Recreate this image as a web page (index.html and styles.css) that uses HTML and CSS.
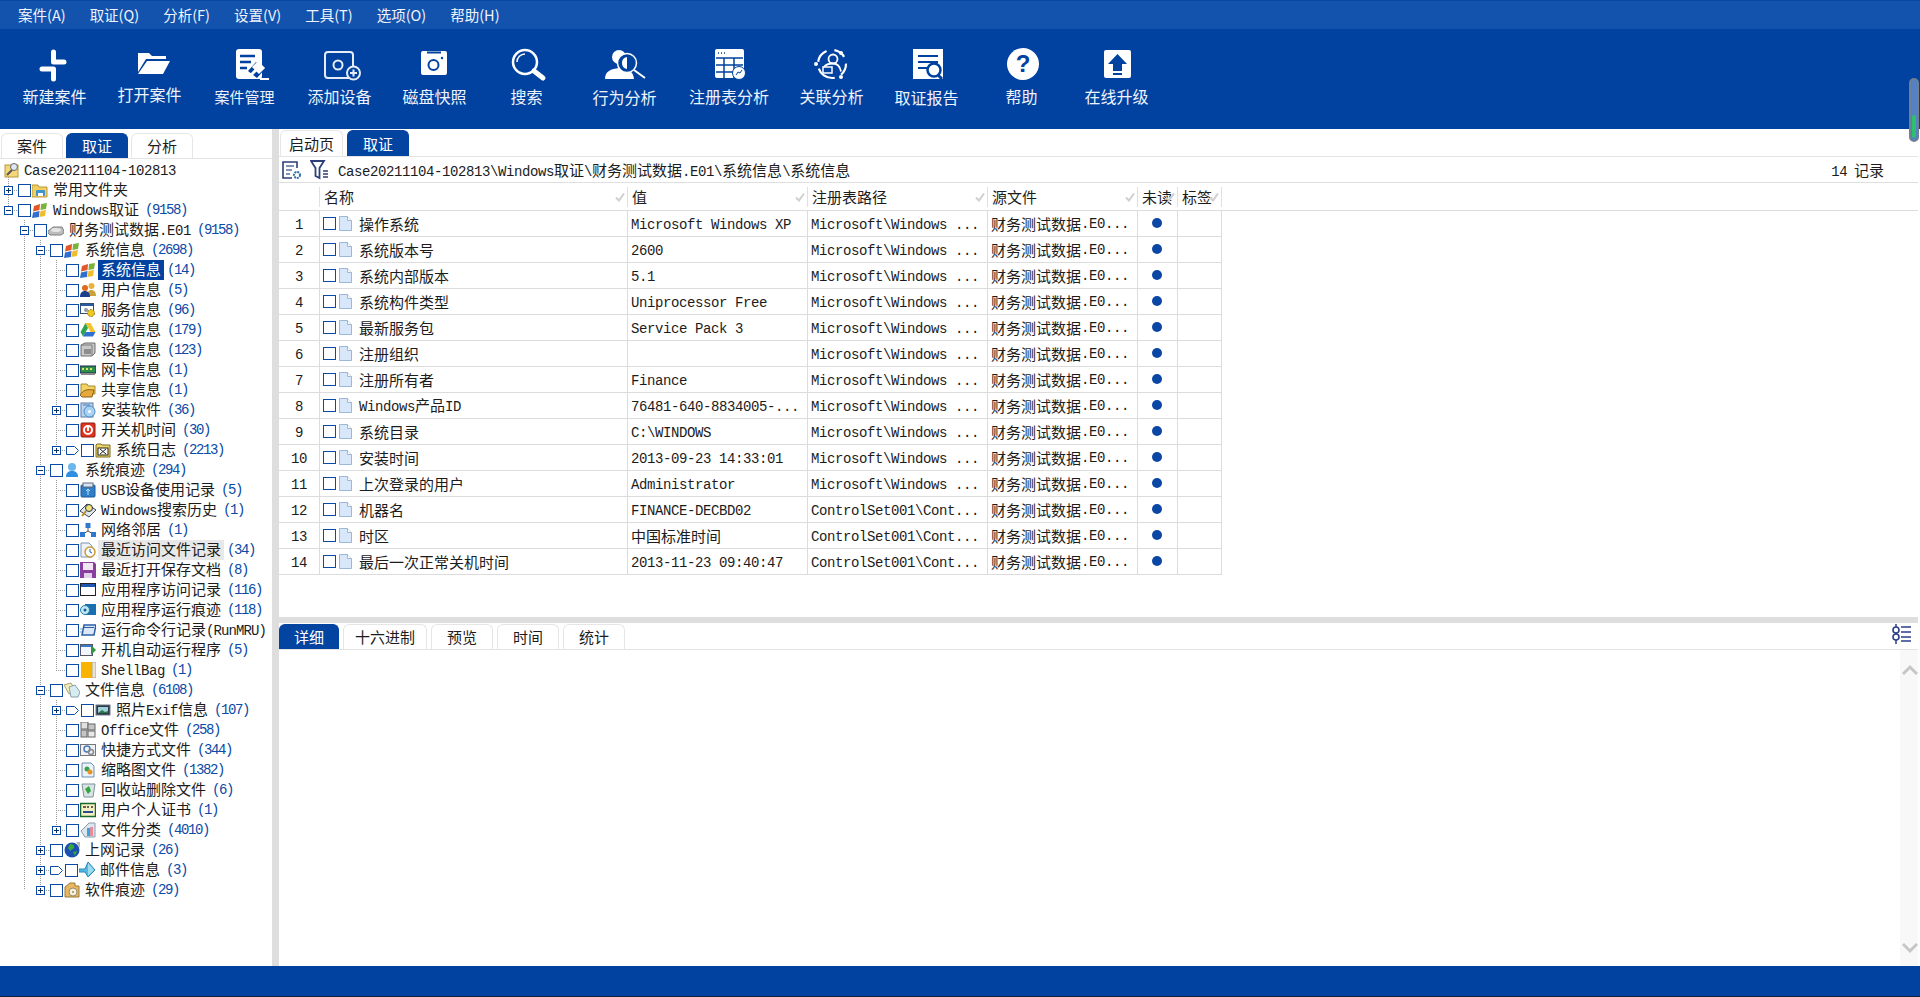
FILE: index.html
```html
<!DOCTYPE html>
<html lang="zh-CN">
<head>
<meta charset="utf-8">
<title>取证</title>
<link rel="stylesheet" href="styles.css">
</head>
<body>
<svg class="defs" aria-hidden="true">
  <symbol id="i-case" viewBox="0 0 16 16"><rect x="1" y="3" width="13" height="12" fill="#f3d77a" stroke="#b8963a"/><circle cx="10" cy="5" r="3.5" fill="#dfe8f0" stroke="#666"/><path d="M8 8 3 13" stroke="#555" stroke-width="2"/></symbol>
  <symbol id="i-folder" viewBox="0 0 16 16"><path d="M0 3h6l1 2h8v10H0z" fill="#f0cf62" stroke="#b99a3a"/><rect x="4" y="8" width="9" height="6" rx="1" fill="#3d95cf"/><rect x="6" y="11" width="5" height="3" fill="#fff"/></symbol>
  <symbol id="i-win" viewBox="0 0 16 16"><path d="M2 4 8 2 7.500 8 1 9.500z" fill="#e2562c"/><path d="M9 2l6-1-1 6-5.500 1z" fill="#7ab33a"/><path d="M1 10.500 7.500 9 7 15l-7 1z" fill="#2f6fc9"/><path d="M8.500 9 14 8l-1 6-5.500 1z" fill="#f2bd2c"/></symbol>
  <symbol id="i-hdd" viewBox="0 0 16 16"><path d="M0 9 5 5h9l2 4v2l-3 2H2L0 11z" fill="#bcbcbc" stroke="#808080"/><ellipse cx="8" cy="8" rx="5" ry="2" fill="#e4e4e4"/></symbol>
  <symbol id="i-users" viewBox="0 0 16 16"><circle cx="11.500" cy="4" r="3" fill="#e8b23c"/><path d="M7 14c0-4 2-6 4.500-6S16 10 16 14z" fill="#c9a13c"/><circle cx="5" cy="6" r="3" fill="#e06a1e"/><path d="M0 15c0-4 2-6 5-6s5 2 5 6z" fill="#1b3f8a"/></symbol>
  <symbol id="i-service" viewBox="0 0 16 16"><rect x=".5" y="1.500" width="13" height="10" fill="#fff" stroke="#34506e"/><rect x="1" y="2" width="12" height="2" fill="#2a5ba0"/><circle cx="11" cy="11" r="3.500" fill="#f0c820" stroke="#8a7410" stroke-dasharray="2 1"/><circle cx="6" cy="8" r="2" fill="#8a9aa8"/></symbol>
  <symbol id="i-drive" viewBox="0 0 16 16"><path d="M5.500 1h5l5 9h-5z" fill="#f4c430"/><path d="M5.500 1 .5 10l2.500 4.500L8 6z" fill="#2da44e"/><path d="M3 14.500h10l2.500-4.500H5.500z" fill="#2e6fd0"/></symbol>
  <symbol id="i-device" viewBox="0 0 16 16"><path d="M1 3 5 1h10v10l-3 3H1z" fill="#c8c8c8" stroke="#6d6d6d"/><rect x="4" y="7" width="7" height="5" fill="#8d8d8d"/><path d="M1 3h11v11" fill="none" stroke="#7a7a7a"/></symbol>
  <symbol id="i-nic" viewBox="0 0 16 16"><rect x="0" y="4" width="16" height="7" fill="#2f8f4a" stroke="#225"/><path d="M2 7h2M6 7h2M10 7h2" stroke="#d6e86a" stroke-width="2"/><path d="M1 12h14" stroke="#888" stroke-width="2"/></symbol>
  <symbol id="i-share" viewBox="0 0 16 16"><path d="M1 2h6l1 2h7v8H1z" fill="#f3d365" stroke="#a88a2a"/><path d="M0 13c3-5 7-6 14-5l-2 7H2z" fill="#e8a93c" stroke="#8a5f1a"/></symbol>
  <symbol id="i-install" viewBox="0 0 16 16"><rect x="1" y="1" width="12" height="14" fill="#bcd5ee" stroke="#5a7da8"/><circle cx="9.500" cy="9.500" r="5.500" fill="#a8d2f4" stroke="#4a86c4"/><circle cx="9.500" cy="9.500" r="1.500" fill="#fff"/><path d="M3 3h7" stroke="#4a78b0"/></symbol>
  <symbol id="i-power" viewBox="0 0 16 16"><rect x="1" y="1" width="14" height="14" rx="1" fill="#e03420" stroke="#8c1c10"/><circle cx="8" cy="8" r="4" fill="none" stroke="#fff" stroke-width="2"/><rect x="7" y="4" width="2" height="5" fill="#fff"/></symbol>
  <symbol id="i-log" viewBox="0 0 16 16"><path d="M2 2h4l1 1h8v12H1V3z" fill="#f0d868" stroke="#7a6a20"/><rect x="3" y="6" width="10" height="7" fill="#fff" stroke="#222"/><path d="M5 7l6 5M11 7l-6 5" stroke="#222"/></symbol>
  <symbol id="i-person" viewBox="0 0 16 16"><circle cx="8" cy="5" r="4" fill="#6bb7ee"/><path d="M2 15c0-5 3-6 6-6s6 1 6 6z" fill="#2f8ee0"/></symbol>
  <symbol id="i-usb" viewBox="0 0 16 16"><rect x="1" y="3" width="14" height="12" rx="1" fill="#2f7fc8" stroke="#1b5a96"/><rect x="3" y="1" width="10" height="4" fill="#d8e6f4" stroke="#667"/><path d="M8 7v6M6 9l2-2 2 2" stroke="#bfe0fa" fill="none"/></symbol>
  <symbol id="i-search" viewBox="0 0 16 16"><path d="M0 9 7 2l9 6-7 7z" fill="#dfe7ef" stroke="#445"/><circle cx="9" cy="6" r="3.500" fill="#f4e27a" stroke="#234"/><path d="M6 9 2 14" stroke="#b88a1a" stroke-width="2"/></symbol>
  <symbol id="i-net" viewBox="0 0 16 16"><path d="M8 5v4M3 12l5-3 5 3" stroke="#555" fill="none"/><rect x="5.500" y="1" width="5" height="5" fill="#2f78d0"/><rect x="0" y="10" width="5" height="5" fill="#2f78d0"/><rect x="11" y="10" width="5" height="5" fill="#2f78d0"/></symbol>
  <symbol id="i-recent" viewBox="0 0 16 16"><path d="M1 1h8l3 3v11H1z" fill="#eef3fa" stroke="#7f93ad"/><circle cx="10" cy="10" r="5" fill="#fff" stroke="#c79a3a" stroke-width="1.500"/><path d="M10 7v3l2 1" stroke="#2f5ea8" fill="none"/></symbol>
  <symbol id="i-save" viewBox="0 0 16 16"><path d="M0 0h14l2 2v14H0z" fill="#8a3fa0"/><rect x="3" y="1" width="10" height="7" fill="#f0e6f4"/><rect x="4" y="11" width="8" height="5" fill="#e0d0e8"/></symbol>
  <symbol id="i-app" viewBox="0 0 16 16"><rect x=".5" y="1.500" width="15" height="12" fill="#fff" stroke="#222"/><rect x="1" y="2" width="14" height="3" fill="#1f57b0"/></symbol>
  <symbol id="i-run" viewBox="0 0 16 16"><rect x="5" y="2" width="11" height="11" fill="#1a6fb0"/><circle cx="5" cy="8" r="4.500" fill="#bfe8f4" stroke="#2a7fa8"/><circle cx="5" cy="8" r="1.500" fill="#1a5f90"/></symbol>
  <symbol id="i-cmd" viewBox="0 0 16 16"><path d="M4 3h12l-2 10H2z" fill="#dce8f6" stroke="#2a5fa8" stroke-width="1.500"/><path d="M4 5.500h10" stroke="#2a5fa8"/><path d="M0 7h3M0 10h2" stroke="#6fa0d0"/></symbol>
  <symbol id="i-startup" viewBox="0 0 16 16"><rect x=".5" y="2.500" width="12" height="11" fill="#f2f6fc" stroke="#556"/><rect x="1" y="3" width="11" height="2" fill="#3a78c8"/><path d="M11 3l5 5-5 5z" fill="#2c9a3c"/></symbol>
  <symbol id="i-bag" viewBox="0 0 16 16"><rect x="1" y="0" width="11" height="16" fill="#f8b400"/><rect x="12" y="0" width="4" height="16" fill="#e8e4d0" stroke="#b0a890"/></symbol>
  <symbol id="i-files" viewBox="0 0 16 16"><path d="M0 3l7-2 5 8-7 3z" fill="#f5eeb8" stroke="#a8a070"/><path d="M5 5l6-2 5 7-2 5H7z" fill="#d6ecf0" stroke="#88a0a8"/></symbol>
  <symbol id="i-photo" viewBox="0 0 16 16"><rect x="1" y="3" width="14" height="10" fill="#2b3a48" stroke="#6c7a88"/><rect x="3" y="5" width="10" height="6" fill="#9fd0dc"/><path d="M3 11l4-3 3 2 3-1v2z" fill="#2c7a4a"/></symbol>
  <symbol id="i-office" viewBox="0 0 16 16"><rect x="1" y="0" width="7" height="7" fill="#e0e0e0" stroke="#666"/><rect x="8" y="2" width="7" height="6" fill="#c4c4c4" stroke="#666"/><rect x="1" y="8" width="6" height="7" fill="#c4c4c4" stroke="#666"/><rect x="8" y="9" width="7" height="6" fill="#e8e8e8" stroke="#666"/></symbol>
  <symbol id="i-link" viewBox="0 0 16 16"><rect x=".5" y="2.500" width="15" height="11" fill="#eef1f5" stroke="#777"/><circle cx="7" cy="7" r="3" fill="none" stroke="#4a7ab8" stroke-width="1.500"/><circle cx="11" cy="10" r="2.500" fill="none" stroke="#8a8a8a" stroke-width="1.500"/></symbol>
  <symbol id="i-thumb" viewBox="0 0 16 16"><path d="M2 1h9l3 3v11H2z" fill="#eaf2fa" stroke="#6f8fb0"/><circle cx="7" cy="7" r="2.500" fill="#3aa04a"/><circle cx="10" cy="10" r="2.500" fill="#e8932a"/></symbol>
  <symbol id="i-bin" viewBox="0 0 16 16"><path d="M2 2h13l-2 13H4z" fill="#d8e4e8" stroke="#7f9298"/><path d="M5 7l4-3 2 5-3 3z" fill="#34a53c"/></symbol>
  <symbol id="i-cert" viewBox="0 0 16 16"><rect x=".5" y="1.500" width="15" height="13" fill="#f6efc0" stroke="#17682f" stroke-width="1.500"/><path d="M3 5h3M7 5h2M11 5h2" stroke="#333" stroke-width="1.500"/><path d="M3 10h10" stroke="#2a4a9a" stroke-width="2"/></symbol>
  <symbol id="i-class" viewBox="0 0 16 16"><path d="M1 9 9 1h6v14H5z" fill="#dde6ee" stroke="#8a9aa8"/><rect x="7" y="6" width="3" height="8" fill="#35a6d8"/><rect x="10" y="5" width="3" height="9" fill="#ea8a9a"/></symbol>
  <symbol id="i-globe" viewBox="0 0 16 16"><circle cx="8" cy="8" r="7.500" fill="#1b4fb0"/><path d="M6 2c3 0 5 2 4 4L6 9 4 6z" fill="#38a83c"/><path d="M9 10l4-1-2 5z" fill="#38a83c"/><path d="M12 0h4v6z" fill="#b8b8b8"/></symbol>
  <symbol id="i-mail" viewBox="0 0 16 16"><path d="M0 7h6l3-7 7 8-7 7-3-5H0z" fill="#4fb8e0" stroke="#2a8ab8"/><path d="M9 1v13l6-6z" fill="#9fdcf0"/></symbol>
  <symbol id="i-soft" viewBox="0 0 16 16"><path d="M1 5l5-4h5v3h4v11H1z" fill="#e8b860" stroke="#9a7a3a"/><circle cx="9" cy="10" r="4" fill="#f4f0e4" stroke="#9a8a6a"/><circle cx="9" cy="10" r="1" fill="#a88a4a"/></symbol>
  <symbol id="i-doc" viewBox="0 0 13 15"><path d="M.500.500h8l4 4v10H.500z" fill="#d8e8fa" stroke="#9db7d6"/><path d="M8.500.500v4h4" fill="#fff" stroke="#9db7d6"/></symbol>
  <symbol id="i-tick" viewBox="0 0 10 10"><path d="M1 5.500 4 8.500 9 1.500" fill="none" stroke="#cfcfcf" stroke-width="2"/></symbol>
  <symbol id="i-tag" viewBox="0 0 13 9"><path d="M.5.500h8l4 4-4 4h-8z" fill="#fff" stroke="#0b4aa6"/></symbol>
</svg>

<nav class="menubar">
  <span>案件(A)</span><span>取证(Q)</span><span>分析(F)</span><span>设置(V)</span><span>工具(T)</span><span>选项(O)</span><span>帮助(H)</span>
</nav>

<header class="toolbar">
  <div class="tool"><svg class="tool-ic" viewBox="-10 0 60 32"><path d="M18.500 3V13H29M7 20H18.500V30" fill="none" stroke="#fff" stroke-width="5" stroke-linecap="round" stroke-linejoin="round"/></svg><span class="lab">新建案件</span></div>
  <div class="tool"><svg class="tool-ic" viewBox="-10 0 60 32"><path d="M8 4h11l3 3h14v3H16L8 23z" fill="#fff"/><path d="M17 12h23l-7 13H8z" fill="#fff"/></svg><span class="lab lift">打开案件</span></div>
  <div class="tool"><svg class="tool-ic" viewBox="-10 0 60 32"><rect x="11" y="0" width="26" height="30" rx="3" fill="#fff"/><path d="M15 7h15M15 13h11M15 19h7" stroke="#0142a0" stroke-width="2.500"/><path d="M23 22l8-9 9 7-8 9z" fill="#0142a0"/><path d="M29 18l4-4 5 5-4 4zM31 21l-7 7" stroke="#fff" stroke-width="3" fill="#fff"/><path d="M35 30h9" stroke="#fff" stroke-width="2"/></svg><span class="lab sink small">案件管理</span></div>
  <div class="tool"><svg class="tool-ic" viewBox="-10 0 60 32"><rect x="5" y="3" width="28" height="26" rx="3" fill="none" stroke="#e6edf7" stroke-width="2"/><circle cx="18" cy="16" r="4.500" fill="none" stroke="#e6edf7" stroke-width="2"/><circle cx="33.500" cy="24" r="6.500" fill="#0142a0" stroke="#e6edf7" stroke-width="2"/><path d="M33.500 20.500v7M30 24h7" stroke="#e6edf7" stroke-width="2"/></svg><span class="lab">添加设备</span></div>
  <div class="tool"><svg class="tool-ic" viewBox="-10 0 60 32"><g transform="translate(-2)"><rect x="8" y="2" width="26" height="24" rx="2" fill="#fff"/><path d="M14 3.500h14" stroke="#0142a0" stroke-width="2"/><circle cx="20.500" cy="16" r="5" fill="#fff" stroke="#0142a0" stroke-width="2"/><circle cx="29" cy="9" r="1.200" fill="#0142a0"/></g></svg><span class="lab">磁盘快照</span></div>
  <div class="tool shift"><svg class="tool-ic" viewBox="-10 0 60 32"><circle cx="18" cy="13" r="12" fill="none" stroke="#fff" stroke-width="2.500"/><path d="M10 13a8 8 0 0 1 8-8" fill="none" stroke="#fff" stroke-width="1.500"/><path d="M27 22l9 7" stroke="#fff" stroke-width="5" stroke-linecap="round"/></svg><span class="lab">搜索</span></div>
  <div class="tool"><svg class="tool-ic" viewBox="-10 0 60 32"><g transform="translate(-2)"><circle cx="16" cy="8" r="7" fill="#fff"/><path d="M2 30c0-8 6-10 14-11s14 3 15 11z" fill="#fff"/><circle cx="24" cy="14" r="9.500" fill="#0142a0" stroke="#fff" stroke-width="1.500"/><path d="M19 14a6 6 0 0 1 5-6v12a6 6 0 0 1-5-6z" fill="#fff"/><path d="M31 21l11 8" stroke="#fff" stroke-width="2"/></g></svg><span class="lab sink">行为分析</span></div>
  <div class="tool wide"><svg class="tool-ic" viewBox="-10 0 60 32"><rect x="6" y="0" width="29" height="29" rx="2" fill="#fff"/><path d="M7 9h27M7 16h27M7 23h27M15 9v20M25 9v20" stroke="#0142a0" stroke-width="1.500"/><path d="M9 4h1M12 4h1M15 4h1" stroke="#0142a0" stroke-width="1.500"/><circle cx="30" cy="24" r="6.500" fill="#fff" stroke="#0142a0"/><path d="M27 26l2-3 2 1 2-3" stroke="#0142a0" fill="none"/></svg><span class="lab">注册表分析</span></div>
  <div class="tool"><svg class="tool-ic" viewBox="-10 0 60 32"><circle cx="20" cy="15" r="14" fill="none" stroke="#fff" stroke-width="2.200" stroke-dasharray="12 7 20 7 14 8"/><circle cx="29" cy="4" r="2" fill="#fff"/><circle cx="4" cy="15" r="2" fill="#fff"/><circle cx="29" cy="28" r="2" fill="#fff"/><circle cx="21" cy="10" r="4.500" fill="none" stroke="#fff" stroke-width="1.800"/><path d="M12 18c2-3 5-3.500 9-3.500s7 3 8 8" fill="none" stroke="#fff" stroke-width="1.800"/><rect x="11" y="18" width="9" height="6" fill="#0142a0" stroke="#fff" stroke-width="1.500"/></svg><span class="lab">关联分析</span></div>
  <div class="tool"><svg class="tool-ic" viewBox="-10 0 60 32"><path d="M6 0h30v30H6z" fill="#fff"/><path d="M11 7h20M11 13h20M11 19h9" stroke="#0142a0" stroke-width="2.200"/><circle cx="27" cy="21" r="6.500" fill="#fff" stroke="#0142a0" stroke-width="2.500"/><path d="M31 26l4 4" stroke="#0142a0" stroke-width="3"/></svg><span class="lab sink">取证报告</span></div>
  <div class="tool"><svg class="tool-ic" viewBox="-10 0 60 32"><circle cx="21" cy="15" r="16" fill="#fff"/><text x="21" y="23" class="help-q">?</text></svg><span class="lab">帮助</span></div>
  <div class="tool"><svg class="tool-ic" viewBox="-10 0 60 32"><rect x="7" y="1" width="27" height="28" rx="2" fill="#fff"/><path d="M20.500 5 30 15h-5v7h-9v-7h-5z" fill="#0142a0"/><path d="M16 25h9" stroke="#0142a0" stroke-width="2"/></svg><span class="lab">在线升级</span></div>
</header>

<main class="main">
  <aside class="side">
    <div class="tabs side-tabs"><span class="tab">案件</span><span class="tab on">取证</span><span class="tab">分析</span></div>
    <div class="tree">
      <div class="row root"><svg class="ti"><use href="#i-case"/></svg><span class="t"><span class="m">Case20211104-102813</span></span></div>
      <div class="kids top-kids">
        <div class="row"><span class="slot"><i class="x plus"></i></span><span class="check"></span><svg class="ti"><use href="#i-folder"/></svg><span class="t">常用文件夹</span></div>
        <div class="row"><span class="slot"><i class="x minus"></i></span><span class="check"></span><svg class="ti"><use href="#i-win"/></svg><span class="t"><span class="m">Windows</span>取证</span><span class="c">(9158)</span></div>
      </div>
      <div class="kids nest">
        <div class="row"><span class="slot"><i class="x minus"></i></span><span class="check"></span><svg class="ti"><use href="#i-hdd"/></svg><span class="t">财务测试数据<span class="m">.E01</span></span><span class="c">(9158)</span></div>
        <div class="kids nest">
          <div class="row"><span class="slot"><i class="x minus"></i></span><span class="check"></span><svg class="ti"><use href="#i-win"/></svg><span class="t">系统信息</span><span class="c">(2698)</span></div>
          <div class="kids nest">
            <div class="row"><span class="slot"></span><span class="check"></span><svg class="ti"><use href="#i-win"/></svg><span class="t sel">系统信息</span><span class="c">(14)</span></div>
            <div class="row"><span class="slot"></span><span class="check"></span><svg class="ti"><use href="#i-users"/></svg><span class="t">用户信息</span><span class="c">(5)</span></div>
            <div class="row"><span class="slot"></span><span class="check"></span><svg class="ti"><use href="#i-service"/></svg><span class="t">服务信息</span><span class="c">(96)</span></div>
            <div class="row"><span class="slot"></span><span class="check"></span><svg class="ti"><use href="#i-drive"/></svg><span class="t">驱动信息</span><span class="c">(179)</span></div>
            <div class="row"><span class="slot"></span><span class="check"></span><svg class="ti"><use href="#i-device"/></svg><span class="t">设备信息</span><span class="c">(123)</span></div>
            <div class="row"><span class="slot"></span><span class="check"></span><svg class="ti"><use href="#i-nic"/></svg><span class="t">网卡信息</span><span class="c">(1)</span></div>
            <div class="row"><span class="slot"></span><span class="check"></span><svg class="ti"><use href="#i-share"/></svg><span class="t">共享信息</span><span class="c">(1)</span></div>
            <div class="row"><span class="slot"><i class="x plus"></i></span><span class="check"></span><svg class="ti"><use href="#i-install"/></svg><span class="t">安装软件</span><span class="c">(36)</span></div>
            <div class="row"><span class="slot"></span><span class="check"></span><svg class="ti"><use href="#i-power"/></svg><span class="t">开关机时间</span><span class="c">(30)</span></div>
            <div class="row"><span class="slot"><i class="x plus"></i></span><svg class="tag"><use href="#i-tag"/></svg><span class="check"></span><svg class="ti"><use href="#i-log"/></svg><span class="t">系统日志</span><span class="c">(2213)</span></div>
          </div>
          <div class="row"><span class="slot"><i class="x minus"></i></span><span class="check"></span><svg class="ti"><use href="#i-person"/></svg><span class="t">系统痕迹</span><span class="c">(294)</span></div>
          <div class="kids nest">
            <div class="row"><span class="slot"></span><span class="check"></span><svg class="ti"><use href="#i-usb"/></svg><span class="t"><span class="m">USB</span>设备使用记录</span><span class="c">(5)</span></div>
            <div class="row"><span class="slot"></span><span class="check"></span><svg class="ti"><use href="#i-search"/></svg><span class="t"><span class="m">Windows</span>搜索历史</span><span class="c">(1)</span></div>
            <div class="row"><span class="slot"></span><span class="check"></span><svg class="ti"><use href="#i-net"/></svg><span class="t">网络邻居</span><span class="c">(1)</span></div>
            <div class="row"><span class="slot"></span><span class="check"></span><svg class="ti"><use href="#i-recent"/></svg><span class="t hov">最近访问文件记录</span><span class="c">(34)</span></div>
            <div class="row"><span class="slot"></span><span class="check"></span><svg class="ti"><use href="#i-save"/></svg><span class="t">最近打开保存文档</span><span class="c">(8)</span></div>
            <div class="row"><span class="slot"></span><span class="check"></span><svg class="ti"><use href="#i-app"/></svg><span class="t">应用程序访问记录</span><span class="c">(116)</span></div>
            <div class="row"><span class="slot"></span><span class="check"></span><svg class="ti"><use href="#i-run"/></svg><span class="t">应用程序运行痕迹</span><span class="c">(118)</span></div>
            <div class="row"><span class="slot"></span><span class="check"></span><svg class="ti"><use href="#i-cmd"/></svg><span class="t">运行命令行记录<span class="m tight">(RunMRU)</span></span></div>
            <div class="row"><span class="slot"></span><span class="check"></span><svg class="ti"><use href="#i-startup"/></svg><span class="t">开机自动运行程序</span><span class="c">(5)</span></div>
            <div class="row"><span class="slot"></span><span class="check"></span><svg class="ti"><use href="#i-bag"/></svg><span class="t"><span class="m">ShellBag</span></span><span class="c">(1)</span></div>
          </div>
          <div class="row"><span class="slot"><i class="x minus"></i></span><span class="check"></span><svg class="ti"><use href="#i-files"/></svg><span class="t">文件信息</span><span class="c">(6108)</span></div>
          <div class="kids nest">
            <div class="row"><span class="slot"><i class="x plus"></i></span><svg class="tag"><use href="#i-tag"/></svg><span class="check"></span><svg class="ti"><use href="#i-photo"/></svg><span class="t">照片<span class="m">Exif</span>信息</span><span class="c">(107)</span></div>
            <div class="row"><span class="slot"></span><span class="check"></span><svg class="ti"><use href="#i-office"/></svg><span class="t"><span class="m">Office</span>文件</span><span class="c">(258)</span></div>
            <div class="row"><span class="slot"></span><span class="check"></span><svg class="ti"><use href="#i-link"/></svg><span class="t">快捷方式文件</span><span class="c">(344)</span></div>
            <div class="row"><span class="slot"></span><span class="check"></span><svg class="ti"><use href="#i-thumb"/></svg><span class="t">缩略图文件</span><span class="c">(1382)</span></div>
            <div class="row"><span class="slot"></span><span class="check"></span><svg class="ti"><use href="#i-bin"/></svg><span class="t">回收站删除文件</span><span class="c">(6)</span></div>
            <div class="row"><span class="slot"></span><span class="check"></span><svg class="ti"><use href="#i-cert"/></svg><span class="t">用户个人证书</span><span class="c">(1)</span></div>
            <div class="row"><span class="slot"><i class="x plus"></i></span><span class="check"></span><svg class="ti"><use href="#i-class"/></svg><span class="t">文件分类</span><span class="c">(4010)</span></div>
          </div>
          <div class="row"><span class="slot"><i class="x plus"></i></span><span class="check"></span><svg class="ti"><use href="#i-globe"/></svg><span class="t">上网记录</span><span class="c">(26)</span></div>
          <div class="row"><span class="slot"><i class="x plus"></i></span><svg class="tag"><use href="#i-tag"/></svg><span class="check"></span><svg class="ti"><use href="#i-mail"/></svg><span class="t">邮件信息</span><span class="c">(3)</span></div>
          <div class="row"><span class="slot"><i class="x plus"></i></span><span class="check"></span><svg class="ti"><use href="#i-soft"/></svg><span class="t">软件痕迹</span><span class="c">(29)</span></div>
        </div>
      </div>
    </div>
  </aside>
  <div class="split"></div>
  <section class="content">
    <div class="upper">
      <div class="tabs main-tabs"><span class="tab">启动页</span><span class="tab on">取证</span></div>
      <div class="pathbar">
        <svg class="path-ic" viewBox="0 0 20 20"><path d="M15 8V2H1v16h9" fill="none" stroke="#2d3f7a" stroke-width="1.600"/><path d="M4 6h8M4 10h6M4 14h4" stroke="#5f6f9a" stroke-width="1.400"/><circle cx="15" cy="15" r="3" fill="none" stroke="#2d6fa8" stroke-width="2" stroke-dasharray="2 .8"/></svg>
        <svg class="path-ic filter" viewBox="0 0 20 20"><path d="M1 1h13L9.500 8v10l-4-2V8z" fill="none" stroke="#2d3f7a" stroke-width="1.800"/><path d="M13 11h5M13 14h5M13 17h5" stroke="#2d3f7a" stroke-width="1.400"/></svg>
        <span class="path-text"><span class="m">Case20211104-102813\Windows</span>取证<span class="m">\</span>财务测试数据<span class="m">.E01\</span>系统信息<span class="m">\</span>系统信息</span>
        <span class="records"><span class="m">14</span>&nbsp;&nbsp;记录</span>
      </div>
      <div class="thead">
        <div class="th first"></div>
        <div class="th">名称<svg class="tick"><use href="#i-tick"/></svg></div>
        <div class="th">值<svg class="tick"><use href="#i-tick"/></svg></div>
        <div class="th">注册表路径<svg class="tick"><use href="#i-tick"/></svg></div>
        <div class="th">源文件<svg class="tick"><use href="#i-tick"/></svg></div>
        <div class="th">未读<svg class="tick"><use href="#i-tick"/></svg></div>
        <div class="th last">标签<svg class="tick"><use href="#i-tick"/></svg></div>
      </div>
      <div class="tr"><div class="td num"><span class="m">1</span></div><div class="td"><span class="check"></span><svg class="di"><use href="#i-doc"/></svg><span class="nm">操作系统</span></div><div class="td m">Microsoft Windows XP</div><div class="td m">Microsoft\Windows ...</div><div class="td">财务测试数据<span class="m">.E0...</span></div><div class="td dotc"><i class="dot"></i></div><div class="td"></div></div>
      <div class="tr"><div class="td num"><span class="m">2</span></div><div class="td"><span class="check"></span><svg class="di"><use href="#i-doc"/></svg><span class="nm">系统版本号</span></div><div class="td m">2600</div><div class="td m">Microsoft\Windows ...</div><div class="td">财务测试数据<span class="m">.E0...</span></div><div class="td dotc"><i class="dot"></i></div><div class="td"></div></div>
      <div class="tr"><div class="td num"><span class="m">3</span></div><div class="td"><span class="check"></span><svg class="di"><use href="#i-doc"/></svg><span class="nm">系统内部版本</span></div><div class="td m">5.1</div><div class="td m">Microsoft\Windows ...</div><div class="td">财务测试数据<span class="m">.E0...</span></div><div class="td dotc"><i class="dot"></i></div><div class="td"></div></div>
      <div class="tr"><div class="td num"><span class="m">4</span></div><div class="td"><span class="check"></span><svg class="di"><use href="#i-doc"/></svg><span class="nm">系统构件类型</span></div><div class="td m">Uniprocessor Free</div><div class="td m">Microsoft\Windows ...</div><div class="td">财务测试数据<span class="m">.E0...</span></div><div class="td dotc"><i class="dot"></i></div><div class="td"></div></div>
      <div class="tr"><div class="td num"><span class="m">5</span></div><div class="td"><span class="check"></span><svg class="di"><use href="#i-doc"/></svg><span class="nm">最新服务包</span></div><div class="td m">Service Pack 3</div><div class="td m">Microsoft\Windows ...</div><div class="td">财务测试数据<span class="m">.E0...</span></div><div class="td dotc"><i class="dot"></i></div><div class="td"></div></div>
      <div class="tr"><div class="td num"><span class="m">6</span></div><div class="td"><span class="check"></span><svg class="di"><use href="#i-doc"/></svg><span class="nm">注册组织</span></div><div class="td m"></div><div class="td m">Microsoft\Windows ...</div><div class="td">财务测试数据<span class="m">.E0...</span></div><div class="td dotc"><i class="dot"></i></div><div class="td"></div></div>
      <div class="tr"><div class="td num"><span class="m">7</span></div><div class="td"><span class="check"></span><svg class="di"><use href="#i-doc"/></svg><span class="nm">注册所有者</span></div><div class="td m">Finance</div><div class="td m">Microsoft\Windows ...</div><div class="td">财务测试数据<span class="m">.E0...</span></div><div class="td dotc"><i class="dot"></i></div><div class="td"></div></div>
      <div class="tr"><div class="td num"><span class="m">8</span></div><div class="td"><span class="check"></span><svg class="di"><use href="#i-doc"/></svg><span class="nm"><span class="m">Windows</span>产品<span class="m">ID</span></span></div><div class="td m">76481-640-8834005-...</div><div class="td m">Microsoft\Windows ...</div><div class="td">财务测试数据<span class="m">.E0...</span></div><div class="td dotc"><i class="dot"></i></div><div class="td"></div></div>
      <div class="tr"><div class="td num"><span class="m">9</span></div><div class="td"><span class="check"></span><svg class="di"><use href="#i-doc"/></svg><span class="nm">系统目录</span></div><div class="td m">C:\WINDOWS</div><div class="td m">Microsoft\Windows ...</div><div class="td">财务测试数据<span class="m">.E0...</span></div><div class="td dotc"><i class="dot"></i></div><div class="td"></div></div>
      <div class="tr"><div class="td num"><span class="m">10</span></div><div class="td"><span class="check"></span><svg class="di"><use href="#i-doc"/></svg><span class="nm">安装时间</span></div><div class="td m">2013-09-23 14:33:01</div><div class="td m">Microsoft\Windows ...</div><div class="td">财务测试数据<span class="m">.E0...</span></div><div class="td dotc"><i class="dot"></i></div><div class="td"></div></div>
      <div class="tr"><div class="td num"><span class="m">11</span></div><div class="td"><span class="check"></span><svg class="di"><use href="#i-doc"/></svg><span class="nm">上次登录的用户</span></div><div class="td m">Administrator</div><div class="td m">Microsoft\Windows ...</div><div class="td">财务测试数据<span class="m">.E0...</span></div><div class="td dotc"><i class="dot"></i></div><div class="td"></div></div>
      <div class="tr"><div class="td num"><span class="m">12</span></div><div class="td"><span class="check"></span><svg class="di"><use href="#i-doc"/></svg><span class="nm">机器名</span></div><div class="td m">FINANCE-DECBD02</div><div class="td m">ControlSet001\Cont...</div><div class="td">财务测试数据<span class="m">.E0...</span></div><div class="td dotc"><i class="dot"></i></div><div class="td"></div></div>
      <div class="tr"><div class="td num"><span class="m">13</span></div><div class="td"><span class="check"></span><svg class="di"><use href="#i-doc"/></svg><span class="nm">时区</span></div><div class="td">中国标准时间</div><div class="td m">ControlSet001\Cont...</div><div class="td">财务测试数据<span class="m">.E0...</span></div><div class="td dotc"><i class="dot"></i></div><div class="td"></div></div>
      <div class="tr"><div class="td num"><span class="m">14</span></div><div class="td"><span class="check"></span><svg class="di"><use href="#i-doc"/></svg><span class="nm">最后一次正常关机时间</span></div><div class="td m">2013-11-23 09:40:47</div><div class="td m">ControlSet001\Cont...</div><div class="td">财务测试数据<span class="m">.E0...</span></div><div class="td dotc"><i class="dot"></i></div><div class="td"></div></div>
    </div>
    <div class="gutter"></div>
    <div class="lower">
      <div class="tabs lower-tabs"><span class="tab on">详细</span><span class="tab hex">十六进制</span><span class="tab">预览</span><span class="tab">时间</span><span class="tab">统计</span>
        <svg class="opts" viewBox="0 0 20 20"><path d="M4 0v20" stroke="#2d3f8a" stroke-width="1.500"/><circle cx="4" cy="6" r="3" fill="#fff" stroke="#2d3f8a" stroke-width="1.600"/><circle cx="4" cy="13" r="3" fill="#fff" stroke="#2d3f8a" stroke-width="1.600"/><path d="M9 3h10M9 8h10M9 13h10M9 17h10" stroke="#2d3f8a" stroke-width="1.600"/></svg>
      </div>
      <div class="detail">
        <div class="vscroll">
          <svg viewBox="0 0 16 12"><path d="M1 10 8 3l7 7" fill="none" stroke="#c6c6c6" stroke-width="3"/></svg>
          <svg viewBox="0 0 16 12"><path d="M1 2l7 7 7-7" fill="none" stroke="#c6c6c6" stroke-width="3"/></svg>
        </div>
      </div>
    </div>
  </section>
</main>
<footer class="statusbar"></footer>
<div class="gauge"><i class="gauge-fill"></i></div>
</body>
</html>
```
FILE: styles.css
```css
* { box-sizing: border-box; }
html, body { margin: 0; height: 100%; }
body {
  width: 1920px; height: 997px; overflow: hidden;
  display: flex; flex-direction: column;
  background: #fff; color: #1c1c1c;
  font-family: "Noto Sans CJK SC", "Liberation Sans", sans-serif;
  font-size: 15px; line-height: 20px;
}
.defs { position: absolute; width: 0; height: 0; }
.m { font-family: "Liberation Mono", "Noto Sans CJK SC", monospace; font-size: 14px; letter-spacing: -.4px; }
.m.tight { letter-spacing: -.9px; }

/* menu */
.menubar {
  height: 29px; flex: none; background: #1353ae; border-top: 1px solid #0a45a2;
  display: flex; gap: 24px; padding-left: 18px; align-items: center;
  color: #f0f4fb; font-size: 14.5px;
}
.menubar span { white-space: nowrap; }

/* toolbar */
.toolbar {
  height: 100px; flex: none; background: #0142a0;
  display: flex; gap: 30px; padding: 20px 0 0 22px; color: #eef3fb;
}
.tool { min-width: 65px; display: flex; flex-direction: column; align-items: center; }
.tool.wide { margin-left: 2px; }
.tool.shift { margin-left: -3px; margin-right: 3px; }
.tool-ic { width: 60px; height: 32px; flex: none; overflow: visible; }
.help-q { font: 700 24px "Liberation Sans", sans-serif; fill: #0142a0; text-anchor: middle; }
.lab { font-size: 16px; line-height: 20px; margin-top: 5px; white-space: nowrap; }
.lab.lift { margin-top: 3px; }
.lab.sink { margin-top: 6px; }
.lab.small { font-size: 15px; }

/* layout */
.main { flex: 1; min-height: 0; display: flex; padding-right: 2px; }
.side { width: 272px; flex: none; padding-top: 4px; overflow: hidden; }
.split { width: 7px; flex: none; background: #dedede; }
.content { flex: 1; min-width: 0; display: flex; flex-direction: column; }
.statusbar { height: 31px; flex: none; background: #0142a0; border-bottom: 1px solid #13233f; }

/* tabs */
.tabs { display: flex; border-bottom: 1px solid #e3e3e3; }
.tab {
  display: flex; align-items: center; justify-content: center;
  border: 1px solid #e6e6e6; border-bottom: 0; border-radius: 6px 6px 0 0;
  color: #1c1c1c; white-space: nowrap;
}
.tab.on { background: #0344a1; border-color: #0344a1; color: #fff; }
.side-tabs { height: 26px; padding-left: 1px; gap: 3px; margin-bottom: 1px; }
.side-tabs .tab { width: 62px; }
.main-tabs { height: 27px; margin-top: 1px; padding-left: 1px; gap: 4px; flex: none; }
.main-tabs .tab { width: 63px; }
.main-tabs .tab.on { width: 62px; }
.lower-tabs { height: 26px; margin-top: 1px; gap: 4px; flex: none; position: relative; padding-bottom: 0; }
.lower-tabs .tab { width: 62px; }
.lower-tabs .tab.on { width: 60px; }
.lower-tabs .tab.hex { width: 84px; }
.opts { width: 20px; height: 20px; margin-left: auto; margin-right: 6px; }

/* tree */
.tree { position: relative; }
.row { height: 20px; display: flex; align-items: center; padding-left: 4px; white-space: nowrap; }
.root .t { margin-left: 1px; }
.slot {
  width: 14px; height: 20px; flex: none; position: relative;
  display: flex; align-items: center;
  background: repeating-linear-gradient(90deg, #9a9a9a 0 1px, transparent 1px 2px) 4px 50% / 10px 1px no-repeat;
}
.x {
  width: 9px; height: 9px; display: block; background-color: #fff; border: 1px solid #0b4aa6;
  background-repeat: no-repeat; background-position: center;
}
.x.minus { background-image: linear-gradient(#0b2f6a, #0b2f6a); background-size: 5px 1px; }
.x.plus {
  background-image: linear-gradient(#0b2f6a, #0b2f6a), linear-gradient(#0b2f6a, #0b2f6a);
  background-size: 5px 1px, 1px 5px;
}
.check {
  width: 13px; height: 13px; flex: none; background: #fff;
  border: 1px solid #0b4aa6; margin-right: 1px; position: relative;
}
.tag { width: 13px; height: 9px; flex: none; margin-right: 2px; position: relative; }
.ti { width: 16px; height: 16px; flex: none; position: relative; }
.t { margin-left: 2px; padding: 0 3px; height: 20px; line-height: 18px; flex: none; }
.t.sel, .t.hov { margin-left: 2px; padding-left: 3px; }
.t.sel { background: #0342a0; color: #fff; }
.t.hov { background: #e8e8e8; }
.c { margin-left: 3px; font-family: "Liberation Mono", monospace; font-size: 14px; letter-spacing: -1.4px; color: #0b4aa6; }
.kids { position: relative; }
.kids::before {
  content: ""; position: absolute; left: 8px; top: 0; bottom: 10px; width: 1px;
  background: repeating-linear-gradient(#9a9a9a 0 1px, transparent 1px 2px);
}
.top-kids::before { top: -3px; }
.nest { padding-left: 0; margin-left: 16px; }

/* path bar */
.pathbar {
  height: 26px; flex: none; display: flex; align-items: center;
  border-bottom: 1px solid #dfdfdf; padding: 0 34px 0 3px;
}
.path-ic { width: 20px; height: 20px; flex: none; }
.filter { margin-left: 8px; }
.path-text { margin-left: 8px; white-space: nowrap; padding-top: 3px; }
.records { margin-left: auto; white-space: nowrap; padding-top: 3px; }

/* table */
.thead, .tr {
  display: grid;
  grid-template-columns: 40px 308px 180px 180px 150px 40px 45px;
}
.thead { height: 28px; border-bottom: 1px solid #dcdcdc; padding-top: 4px; }
.th {
  height: 20px; border-left: 1px solid #e0e0e0; padding-left: 4px;
  line-height: 20px; position: relative; white-space: nowrap;
}
.th.first { border-left: 0; }
.th.last { border-right: 1px solid #e0e0e0; }
.tick { position: absolute; right: 2px; top: 5px; width: 10px; height: 10px; }
.tr { width: 943px; height: 26px; }
.td {
  height: 26px; border-left: 1px solid #dcdcdc; border-bottom: 1px solid #dcdcdc;
  padding: 1px 0 0 3px; display: flex; align-items: center; white-space: nowrap; overflow: hidden;
  font-size: 15px;
}
.td.m {
  font-family: "Liberation Mono", monospace; font-size: 14px; letter-spacing: -.4px;
  display: block; line-height: 28px; padding-top: 0; white-space: pre;
}
.td:last-child { border-right: 1px solid #dcdcdc; }
.td.num { border-left: 0; justify-content: center; padding: 3px 0 0; }
.td .check { margin-right: 3px; margin-top: -2px; }
.di { width: 13px; height: 15px; flex: none; margin-top: -2px; }
.nm { margin-left: 7px; }
.td.dotc { padding: 0 2px 2px 0; justify-content: center; }
.dot { width: 10px; height: 10px; border-radius: 50%; background: #0a47a5; display: block; }

/* lower */
.upper { height: 487px; flex: none; }
.gutter { height: 6px; flex: none; background: #dedede; margin-top: 1px; }
.lower { flex: 1; min-height: 0; display: flex; flex-direction: column; }
.detail { flex: 1; min-height: 0; display: flex; justify-content: flex-end; }
.vscroll {
  width: 18px; background: #f8f8f8; display: flex; flex-direction: column;
  justify-content: space-between; padding: 14px 0 12px 2px;
}
.vscroll svg { width: 16px; height: 12px; display: block; }

/* overlay gauge */
.gauge {
  position: absolute; left: 1909px; top: 78px; width: 10px; height: 64px;
  border: 2px solid #6f7f94; border-radius: 5px; background: #5481c4; overflow: hidden;
  display: flex; align-items: flex-end; justify-content: center;
}
.gauge-fill { width: 4px; height: 23px; margin-bottom: 2px; background: #2bc06e; border-radius: 2px; display: block; }
```
